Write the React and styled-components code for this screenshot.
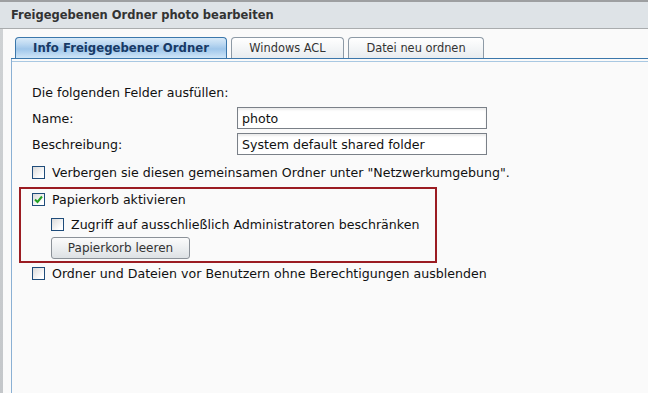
import React from 'react';
import styled, { createGlobalStyle } from 'styled-components';

const GlobalStyle = createGlobalStyle`
  html, body {
    margin: 0;
    padding: 0;
    background: #fafafa;
  }
  body {
    font-family: "DejaVu Sans", Verdana, sans-serif;
    font-size: 12.6px;
    color: #111;
    overflow: hidden;
  }
`;

const Window = styled.div`
  width: 648px;
  height: 393px;
  display: flex;
  flex-direction: column;
  background: #fafafa;
`;

const TitleBar = styled.div`
  height: 26px;
  border-top: 2px solid #9d9fa1;
  border-bottom: 1px solid #a9acae;
  background: #dee3e7;
  display: flex;
  align-items: center;
  padding-left: 11px;
  font-weight: bold;
  font-size: 11.5px;
  color: #333;
`;

const Body = styled.div`
  flex: 1;
  display: flex;
`;

const BackStrip = styled.div`
  width: 3px;
  background: linear-gradient(#cfd2d4, #c4c7ca);
`;

const Main = styled.div`
  flex: 1;
  display: flex;
  flex-direction: column;
  padding-left: 8px;
`;

const TabStrip = styled.div`
  display: flex;
  align-items: flex-end;
  gap: 4px;
  padding: 8px 0 0 4px;
  border-bottom: 1px solid #3b77ab;
`;

const Tab = styled.div`
  width: ${(p) => p.$w}px;
  height: 20px;
  box-sizing: content-box;
  display: flex;
  align-items: center;
  justify-content: center;
  border: 1px solid ${(p) => (p.$active ? '#3b77ab' : '#8d9aa6')};
  border-bottom: none;
  border-radius: 4px 4px 0 0;
  font-size: ${(p) => (p.$active ? 11.7 : 11.4)}px;
  font-weight: ${(p) => (p.$active ? 'bold' : 'normal')};
  color: ${(p) => (p.$active ? '#173a66' : '#333')};
  background: ${(p) =>
    p.$active
      ? 'linear-gradient(#d9eaf8 0%, #bcd8f1 30%, #9fc6ea 55%, #cfe6f8 100%)'
      : 'linear-gradient(#ffffff, #e8ecef)'};
`;

const Panel = styled.div`
  flex: 1;
  border-left: 1px solid #8ab0d4;
  padding: 26px 0 0 20px;
  display: flex;
  flex-direction: column;
  align-items: flex-start;
  background: linear-gradient(#fafafa 0 2px, #a9c8e2 2px 3px, #fafafa 3px);
`;

const Line = styled.div`
  line-height: 16px;
  height: 16px;
`;

const FieldRow = styled.div`
  display: flex;
  align-items: center;
  margin-top: ${(p) => p.$mt}px;
`;

const Label = styled.div`
  width: 205px;
`;

const Input = styled.input`
  width: 250px;
  height: 22px;
  box-sizing: border-box;
  border: 1px solid #7a8088;
  box-shadow: inset 0 2px 2px rgba(0, 0, 0, 0.08);
  background: #fff;
  padding: 1px 4px 0;
  font-family: "DejaVu Sans", Verdana, sans-serif;
  font-size: 12.6px;
  color: #111;
  outline: none;
`;

const CheckRow = styled.label`
  display: flex;
  align-items: center;
  gap: 7px;
  height: 18px;
  margin-top: ${(p) => p.$mt || 0}px;
  margin-left: ${(p) => p.$ml || 0}px;
  white-space: nowrap;
`;

const Box = styled.span`
  width: 11px;
  height: 11px;
  border: 1px solid #1f4c7a;
  background: linear-gradient(135deg, #dadada, #ffffff 80%);
  display: flex;
  align-items: center;
  justify-content: center;
`;

const Highlight = styled.div`
  width: 403px;
  margin: 6px 0 0 -13px;
  border: 2px solid #9b1c22;
  padding: 1px 0 2px 11px;
  display: flex;
  flex-direction: column;
  align-items: flex-start;
`;

const Button = styled.button`
  margin: 4px 0 0 19px;
  width: 139px;
  height: 22px;
  border: 1px solid #8b9198;
  border-radius: 3px;
  background: linear-gradient(#fbfbfb, #e9ecee 60%, #dde1e4);
  font-family: "DejaVu Sans", Verdana, sans-serif;
  font-size: 12px;
  color: #333;
  padding: 0;
`;

const Check = ({ checked }) => (
  <Box>
    {checked && (
      <svg width="9" height="9" viewBox="0 0 9 9">
        <path d="M1 4.5 L3.5 7 L8 1.5" fill="none" stroke="#22a022" strokeWidth="2" />
      </svg>
    )}
  </Box>
);

const App = () => (
  <>
    <GlobalStyle />
    <Window>
      <TitleBar>Freigegebenen Ordner photo bearbeiten</TitleBar>
      <Body>
        <BackStrip />
        <Main>
          <TabStrip>
            <Tab $active $w={210}>Info Freigegebener Ordner</Tab>
            <Tab $w={111}>Windows ACL</Tab>
            <Tab $w={134}>Datei neu ordnen</Tab>
          </TabStrip>
          <Panel>
            <Line>Die folgenden Felder ausfüllen:</Line>
            <FieldRow $mt={6}>
              <Label>Name:</Label>
              <Input defaultValue="photo" />
            </FieldRow>
            <FieldRow $mt={4}>
              <Label>Beschreibung:</Label>
              <Input defaultValue="System default shared folder" />
            </FieldRow>
            <CheckRow $mt={8}>
              <Check />
              Verbergen sie diesen gemeinsamen Ordner unter "Netzwerkumgebung".
            </CheckRow>
            <Highlight>
              <CheckRow>
                <Check checked />
                Papierkorb aktivieren
              </CheckRow>
              <CheckRow $mt={7} $ml={19}>
                <Check />
                Zugriff auf ausschließlich Administratoren beschränken
              </CheckRow>
              <Button>Papierkorb leeren</Button>
            </Highlight>
            <CheckRow $mt={1}>
              <Check />
              Ordner und Dateien vor Benutzern ohne Berechtigungen ausblenden
            </CheckRow>
          </Panel>
        </Main>
      </Body>
    </Window>
  </>
);

export default App;
